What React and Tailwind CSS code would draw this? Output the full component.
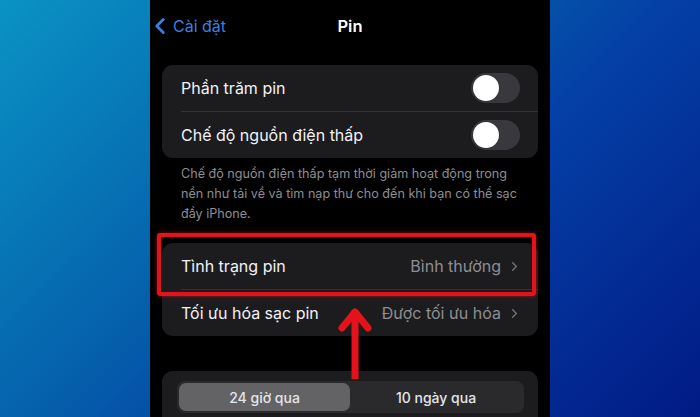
import { ChevronLeft, ChevronRight } from "lucide-react";

function Toggle() {
  return (
    <div className="flex h-[30px] w-[49px] shrink-0 items-center rounded-full bg-[#39393d] px-[2px]">
      <div className="h-[26px] w-[26px] rounded-full bg-white shadow" />
    </div>
  );
}

function LinkRow({ label, value }) {
  return (
    <div className="flex h-[46px] items-center pl-[19px] pr-[16px]">
      <span className="flex-1 text-[16px] text-[#f2f2f7]">{label}</span>
      <span className="text-[16px] text-[#8e8e93]">{value}</span>
      <ChevronRight className="ml-[6px] h-[15px] w-[15px] text-[#6e6e73]" strokeWidth={2.5} />
    </div>
  );
}

export default function App() {
  return (
    <div
      className="flex h-[417px] w-[700px] justify-center overflow-hidden bg-[linear-gradient(135deg,#0a93c4_0%,#0560ab_40%,#0440a6_60%,#011a84_100%)]"
      style={{ fontFamily: "Inter, 'Noto Sans', sans-serif" }}
    >
      <div className="relative flex h-full w-[400px] flex-col overflow-hidden bg-black px-3">
        {/* nav bar */}
        <div className="relative flex h-[52px] shrink-0 items-center">
          <div className="flex items-center text-[#3a7fe0]">
            <ChevronLeft className="-ml-[15px] h-[26px] w-[26px]" strokeWidth={2.6} />
            <span className="text-[16px]">Cài đặt</span>
          </div>
          <div className="absolute inset-x-0 text-center text-[16.5px] font-semibold text-white">Pin</div>
        </div>

        {/* card 1 */}
        <div className="mt-[13px] shrink-0 rounded-[11px] bg-[#1c1c1e]">
          <div className="flex h-[46px] items-center pl-[19px] pr-[18px]">
            <span className="flex-1 text-[16px] text-[#f2f2f7]">Phần trăm pin</span>
            <Toggle />
          </div>
          <div className="ml-[19px] h-px bg-[#333336]" />
          <div className="flex h-[46px] items-center pl-[19px] pr-[18px]">
            <span className="flex-1 text-[16px] text-[#f2f2f7]">Chế độ nguồn điện thấp</span>
            <Toggle />
          </div>
        </div>
        <p className="mt-[6px] shrink-0 pl-[19px] pr-2 text-[12.6px] leading-[20px] text-[#8e8e93]">
          Chế độ nguồn điện thấp tạm thời giảm hoạt động trong nền như tải về và tìm nạp thư cho đến khi bạn có thể sạc đầy iPhone.
        </p>

        {/* card 2 */}
        <div className="relative mt-[19px] shrink-0 rounded-[11px] bg-[#1c1c1e]">
          <LinkRow label="Tình trạng pin" value="Bình thường" />
          <div className="ml-[19px] h-px bg-[#333336]" />
          <LinkRow label="Tối ưu hóa sạc pin" value="Được tối ưu hóa" />
          <div className="absolute left-[-5px] top-[-10px] h-[63px] w-[379px] rounded-[3px] border-[4px] border-[#e3121b] shadow-[0_0_4px_rgba(227,18,27,0.6)]" />
        </div>

        {/* card 3 */}
        <div className="mt-[35px] h-[60px] shrink-0 rounded-[11px] bg-[#1c1c1e] pl-[15px] pr-[14px] pt-[10px]">
          <div className="flex h-[32px] rounded-[8px] bg-[#2a2a2d] p-[2px]">
            <div className="flex w-[171px] items-center justify-center rounded-[7px] bg-[#636366] text-[14px] font-medium text-[#e5e5ea]">
              24 giờ qua
            </div>
            <div className="flex flex-1 items-center justify-center text-[14px] font-medium text-[#e5e5ea]">
              10 ngày qua
            </div>
          </div>
        </div>

        {/* red arrow */}
        <svg className="absolute left-[188px] top-[304px]" width="34" height="75" viewBox="0 0 34 75">
          <path d="M17 6 L17 75" stroke="#e3121b" strokeWidth="7" fill="none" />
          <path d="M4 24 L17 8 L30 24" stroke="#e3121b" strokeWidth="7" fill="none" strokeLinecap="round" strokeLinejoin="round" />
        </svg>
      </div>
    </div>
  );
}
